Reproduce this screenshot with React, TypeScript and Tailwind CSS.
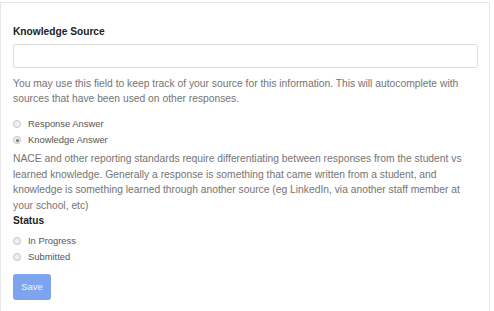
export default function App() {
  return (
    <div className="w-[494px] h-[311px] bg-white overflow-hidden" style={{ fontFamily: '"Liberation Sans", Arial, sans-serif' }}>
      <div className="mt-[2px] w-[490px] h-[320px] border-t border-r border-l border-[#e6e6e6] pl-[12px] pr-[11px] pt-[21px]">
        <div className="text-[10.2px] font-bold text-[#222] leading-[16px]">Knowledge Source</div>
        <input className="mt-[4px] block w-full h-[24px] border border-[#dcdcdc] rounded-[2px] outline-none" />
        <p className="mt-[8px] text-[10.3px] leading-[15px] text-[#747474] whitespace-nowrap">
          You may use this field to keep track of your source for this information. This will autocomplete with
          <br />
          sources that have been used on other responses.
        </p>
        <div className="mt-[11px] flex flex-col gap-[2px]">
          <Radio label="Response Answer" />
          <Radio label="Knowledge Answer" checked />
        </div>
        <p className="mt-[4px] text-[10.3px] leading-[15.7px] text-[#747474] whitespace-nowrap">
          NACE and other reporting standards require differentiating between responses from the student vs
          <br />
          learned knowledge. Generally a response is something that came written from a student, and
          <br />
          knowledge is something learned through another source (eg LinkedIn, via another staff member at
          <br />
          your school, etc)
        </p>
        <div className="mt-[1px] text-[10.2px] font-bold text-[#222] leading-[12px]">Status</div>
        <div className="mt-[7px] flex flex-col gap-[2px]">
          <Radio label="In Progress" />
          <Radio label="Submitted" />
        </div>
        <button className="mt-[10px] block w-[38px] h-[26px] rounded-[3px] bg-[#7fa4ef] text-[#eef3fd] text-[9.5px]">Save</button>
      </div>
    </div>
  );
}

function Radio({ label, checked }: { label: string; checked?: boolean }) {
  return (
    <div className="flex items-center h-[14px] text-[9.4px] text-[#555]">
      <span className="w-[8px] h-[8px] rounded-full border border-[#c4c4c4] bg-[#efefef] flex items-center justify-center">
        {checked && <span className="w-[3px] h-[3px] rounded-full bg-[#777]" />}
      </span>
      <span className="ml-[7px]">{label}</span>
    </div>
  );
}
